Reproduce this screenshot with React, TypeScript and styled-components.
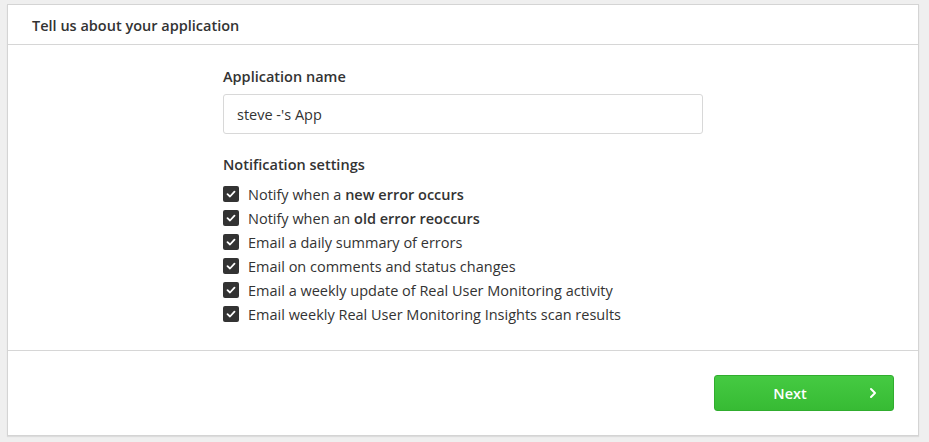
import React from "react";
import styled, { createGlobalStyle } from "styled-components";

const Global = createGlobalStyle`
  html, body { margin: 0; padding: 0; background: #efefef; }
  body { font-family: "Open Sans", "Liberation Sans", sans-serif; color: #333; }
  * { box-sizing: border-box; }
`;

const Page = styled.div`
  padding: 4px 10px 6px 7px;
  width: 929px;
`;

const Card = styled.div`
  background: #fff;
  border: 1px solid #d4d4d4;
  box-shadow: 0 1px 1px rgba(0,0,0,0.08);
  display: flex;
  flex-direction: column;
`;

const Header = styled.div`
  height: 40px;
  display: flex;
  align-items: center;
  padding-left: 24px;
  padding-top: 1px;
  font-size: 14.5px;
  font-weight: 600;
  color: #333;
  border-bottom: 1px solid #d6d6d6;
`;

const Body = styled.div`
  padding: 22px 0 24px;
  display: flex;
  justify-content: center;
  border-bottom: 1px solid #d6d6d6;
`;

const Column = styled.div`
  width: 480px;
  display: flex;
  flex-direction: column;
`;

const Label = styled.div<{ $gap: number }>`
  font-size: 14.5px;
  font-weight: 600;
  line-height: 20px;
  margin-bottom: ${(p) => p.$gap}px;
`;

const Input = styled.input`
  height: 40px;
  width: 480px;
  border: 1px solid #d8d8d8;
  border-radius: 3px;
  padding: 0 13px;
  font-family: "Open Sans", "Liberation Sans", sans-serif;
  font-size: 14.5px;
  color: #333;
  outline: none;
  margin-bottom: 21px;
`;

const List = styled.div`
  display: flex;
  flex-direction: column;
`;

const Row = styled.label`
  height: 24px;
  display: flex;
  align-items: center;
  gap: 9px;
  font-size: 14.5px;
  color: #333;
  b { font-weight: 600; }
`;

const Box = styled.span`
  width: 16px;
  height: 16px;
  border-radius: 2px;
  background: #333;
  display: flex;
  align-items: center;
  justify-content: center;
  flex-shrink: 0;
`;

const Footer = styled.div`
  height: 84px;
  display: flex;
  align-items: center;
  justify-content: flex-end;
  padding-right: 24px;
`;

const NextButton = styled.button`
  width: 180px;
  height: 36px;
  position: relative;
  border: 1px solid #30ad2e;
  border-radius: 3px;
  background: linear-gradient(#45ca42, #37bb34);
  color: #fff;
  font-family: "Open Sans", "Liberation Sans", sans-serif;
  font-size: 14.5px;
  font-weight: 600;
  display: flex;
  align-items: center;
  justify-content: center;
  padding: 0 28px 0 0;
  cursor: pointer;
`;

const Chevron = styled.svg`
  position: absolute;
  right: 16px;
  top: 50%;
  transform: translateY(-50%);
`;

const Check = () => (
  <svg width="10" height="8" viewBox="0 0 10 8">
    <path d="M1.5 4.2 L4 6.5 L8.5 1.7" fill="none" stroke="#fff" strokeWidth="1.8" strokeLinecap="round" strokeLinejoin="round" />
  </svg>
);

const items: React.ReactNode[] = [
  <>Notify when a <b>new error occurs</b></>,
  <>Notify when an <b>old error reoccurs</b></>,
  <>Email a daily summary of errors</>,
  <>Email on comments and status changes</>,
  <>Email a weekly update of Real User Monitoring activity</>,
  <>Email weekly Real User Monitoring Insights scan results</>,
];

export default function App() {
  return (
    <>
      <Global />
      <Page>
        <Card>
          <Header>Tell us about your application</Header>
          <Body>
            <Column>
              <Label $gap={7}>Application name</Label>
              <Input defaultValue="steve -'s App" />
              <Label $gap={7}>Notification settings</Label>
              <List>
                {items.map((it, i) => (
                  <Row key={i}>
                    <Box><Check /></Box>
                    <span>{it}</span>
                  </Row>
                ))}
              </List>
            </Column>
          </Body>
          <Footer>
            <NextButton>
              Next
              <Chevron width="8" height="11" viewBox="0 0 8 11">
                <path d="M2 1.5 L6 5.5 L2 9.5" fill="none" stroke="#fff" strokeWidth="2" strokeLinecap="round" strokeLinejoin="round" />
              </Chevron>
            </NextButton>
          </Footer>
        </Card>
      </Page>
    </>
  );
}
